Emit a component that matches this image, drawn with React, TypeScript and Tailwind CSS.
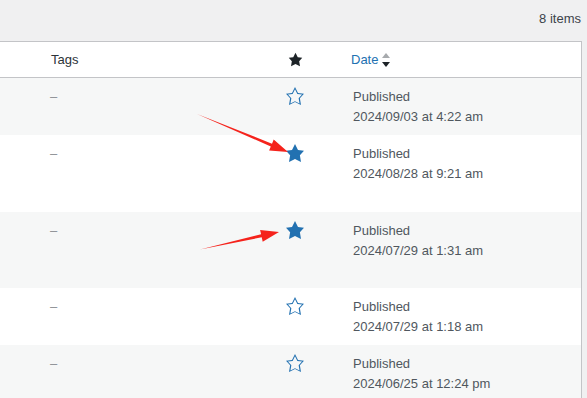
import React from 'react'

const STAR_FILLED = 'M10 1l3 6 6 .75-4.12 4.62L16 19l-6-3-6 3 1.13-6.63L1 7.75 7 7z'
const STAR_EMPTY =
  'M10 1L7 7l-6 .75 4.13 4.62L4 19l6-3 6 3-1.12-6.63L19 7.75 13 7zm0 2.24l2.34 4.69 4.69.5-3.4 3.8.93 5.26-4.57-2.29-4.56 2.29.92-5.26-3.4-3.8 4.7-.5z'

interface Row {
  date: string
  starred: boolean
  height: string
  striped: boolean
}

const rows: Row[] = [
  { date: '2024/09/03 at 4:22 am', starred: false, height: 'h-[57px]', striped: true },
  { date: '2024/08/28 at 9:21 am', starred: true, height: 'h-[77px]', striped: false },
  { date: '2024/07/29 at 1:31 am', starred: true, height: 'h-[76px]', striped: true },
  { date: '2024/07/29 at 1:18 am', starred: false, height: 'h-[57px]', striped: false },
  { date: '2024/06/25 at 12:24 pm', starred: false, height: 'h-[57px]', striped: true },
]

const Star: React.FC<{ filled: boolean; className?: string }> = ({ filled, className = '' }) => (
  <svg viewBox="0 0 20 20" className={className} fill="currentColor">
    <path d={filled ? STAR_FILLED : STAR_EMPTY} />
  </svg>
)

const SortIcon = () => (
  <svg viewBox="0 0 8 14" className="w-[8px] h-[14px] ml-[4px]">
    <path d="M4 0L8 5H0z" fill="#a7aaad" />
    <path d="M4 14L8 9H0z" fill="#1d2327" />
  </svg>
)

export default function App() {
  return (
    <div
      className="relative w-full h-[398px] overflow-hidden bg-[#f0f0f1] text-[13px]"
      style={{ fontFamily: '"Liberation Sans", Arial, sans-serif' }}
    >
      {/* Item count */}
      <div className="h-[41px] flex items-center justify-end pr-[6px] pb-[4px] text-[#3c434a]">8 items</div>

      {/* List table */}
      <div className="mr-[5px] bg-white border-t border-r border-[#c3c4c7]">
        <div className="flex items-center h-[36px] border-b border-[#c3c4c7]">
          <div className="w-[270px] pl-[51px] text-[#2c3338]">Tags</div>
          <div className="w-[50px] flex justify-center">
            <Star filled className="w-[15px] h-[15px] text-[#1d2327]" />
          </div>
          <div className="pl-[31px] flex items-center text-[#2271b1]">
            Date
            <SortIcon />
          </div>
        </div>

        {rows.map((row) => (
          <div
            key={row.date}
            className={`flex pt-[8px] ${row.height} ${row.striped ? 'bg-[#f6f7f7]' : 'bg-white'}`}
          >
            <div className="w-[270px] pl-[50px] pt-[1px] leading-[20px] text-[#8c8f94]">–</div>
            <div className="w-[50px] flex justify-center">
              <Star filled={row.starred} className="w-[20px] h-[20px] text-[#2271b1]" />
            </div>
            <div className="pl-[33px] pt-[1px] leading-[20px] text-[#50575e]">
              <div>Published</div>
              <div>{row.date}</div>
            </div>
          </div>
        ))}
      </div>

      {/* Annotation arrows */}
      <svg className="absolute inset-0 pointer-events-none" width="587" height="398">
        <polygon
          points="197,114 272,143.7 273.7,139.6 288,152 269.1,150.6 270.8,146.5"
          fill="#f5231c"
        />
        <polygon
          points="200,249.5 261.1,234.3 260.1,229.9 279,232 262.7,241.7 261.7,237.3"
          fill="#f5231c"
        />
      </svg>
    </div>
  )
}
